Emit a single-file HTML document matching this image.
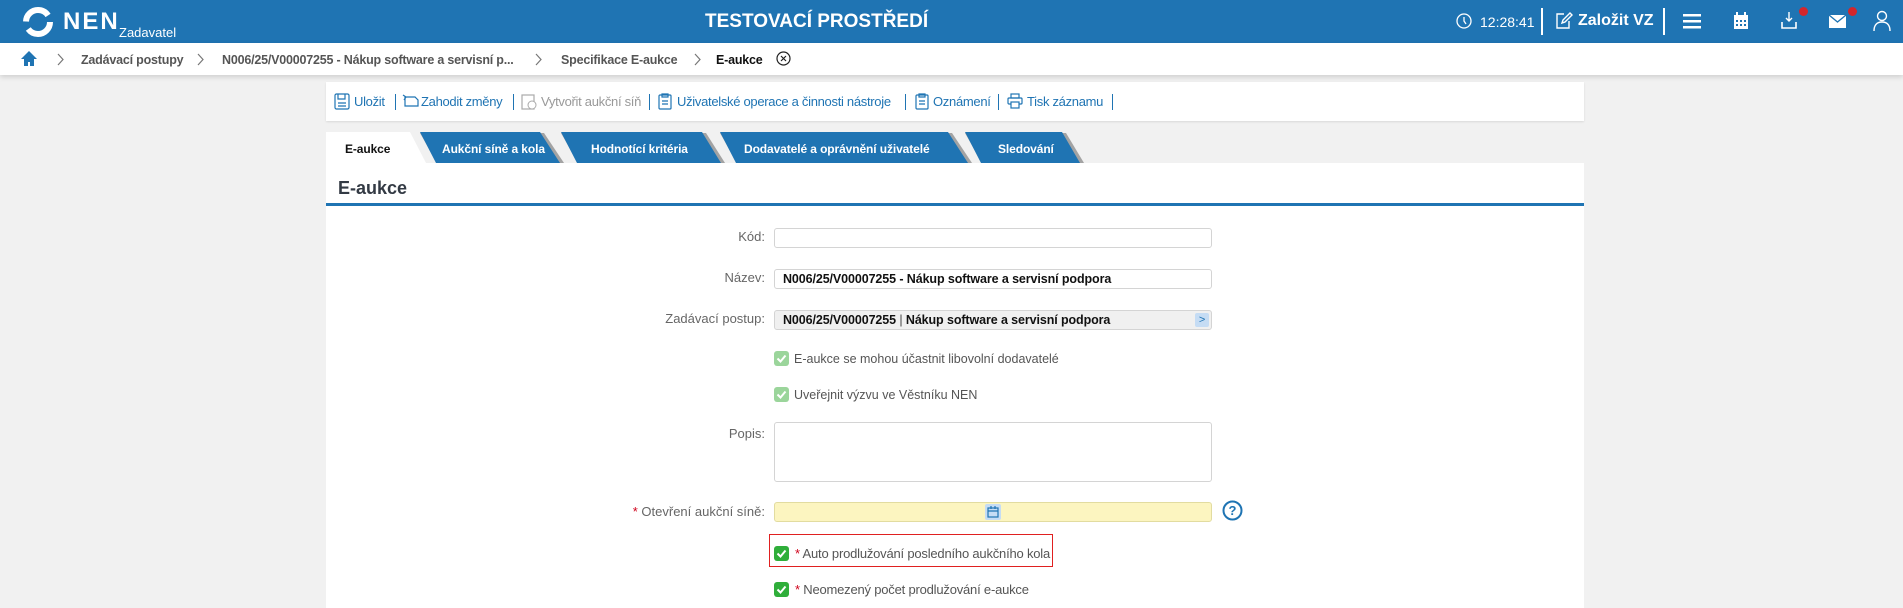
<!DOCTYPE html>
<html><head><meta charset="utf-8">
<style>
*{box-sizing:border-box;margin:0;padding:0}
body{width:1903px;height:608px;overflow:hidden;background:#f1f1f1;font-family:"Liberation Sans",sans-serif;position:relative}
.hdr{position:absolute;left:0;top:0;width:1903px;height:43px;background:#1f74b3;color:#fff}
.abs{position:absolute}
.bc{position:absolute;left:0;top:43px;width:1903px;height:32px;background:#fff;box-shadow:0 2px 5px rgba(0,0,0,.15);font-size:12.5px;font-weight:bold;color:#555}
.bc span{position:absolute;top:10px;white-space:nowrap;letter-spacing:-.2px}
.bc svg.ch{position:absolute;top:10px}
.tb{position:absolute;left:326px;top:82px;width:1258px;height:39px;background:#fff;box-shadow:0 1px 2px rgba(0,0,0,.1);font-size:13px;color:#1f74b3;letter-spacing:-.3px}
.tb span{position:absolute;top:12px;white-space:nowrap}
.tb svg{position:absolute;top:11px}
.sep{width:1px;height:16px;background:#1f74b3;top:12px!important}
.tab{position:absolute;top:132px;height:31px;color:#fff;font-size:12px;font-weight:bold;letter-spacing:-.1px}
.tab svg{position:absolute;left:0;top:0}
.tab b{position:absolute;top:10px;white-space:nowrap}
.panel{position:absolute;left:326px;top:163px;width:1258px;height:445px;background:#fff}
.lbl{position:absolute;right:1138px;font-size:13px;color:#666;white-space:nowrap}
.inp{position:absolute;left:774px;width:438px;height:20px;border:1px solid #d4d4d4;border-radius:3px;background:#fff;font-size:12.5px;font-weight:bold;color:#111;padding:3px 8px;white-space:nowrap;line-height:13px;letter-spacing:-.1px}
.cb{position:absolute;left:774px;width:15px;height:15px;border-radius:3px}
.cbt{position:absolute;left:794px;font-size:12.5px;color:#555;white-space:nowrap}
</style></head><body>
<div class="hdr">
<svg class="abs" style="left:22px;top:6px" width="32" height="32" viewBox="0 0 32 32"><circle cx="16" cy="16" r="12" fill="none" stroke="#fff" stroke-width="6" stroke-dasharray="30 8"/></svg>
<div class="abs" style="left:63px;top:8px;font-size:24px;font-weight:bold;letter-spacing:2px">NEN</div>
<div class="abs" style="left:119px;top:25px;font-size:13px">Zadavatel</div>
<div class="abs" style="left:705px;top:11px;font-size:19px;font-weight:bold">TESTOVACÍ PROSTŘEDÍ</div>
<svg class="abs" style="left:1456px;top:13px" width="16" height="16" viewBox="0 0 16 16"><circle cx="8" cy="8" r="7" fill="none" stroke="#fff" stroke-width="1.3"/><path d="M8 4v4l2 3" fill="none" stroke="#fff" stroke-width="1.3"/></svg>
<div class="abs" style="left:1480px;top:14px;font-size:14px">12:28:41</div>
<div class="abs" style="left:1541px;top:8px;width:2px;height:27px;background:#fff"></div>
<svg class="abs" style="left:1555px;top:11px" width="18" height="19" viewBox="0 0 18 19"><path d="M9 3H2v14h12v-7" fill="none" stroke="#fff" stroke-width="1.4"/><path d="M7 12l1-3 7-7 2 2-7 7z" fill="none" stroke="#fff" stroke-width="1.4"/></svg>
<div class="abs" style="left:1578px;top:12px;font-size:16px;font-weight:bold">Založit VZ</div>
<div class="abs" style="left:1663px;top:8px;width:2px;height:27px;background:#fff"></div>
<svg class="abs" style="left:1683px;top:14px" width="18" height="15"><rect y="0" width="18" height="2.5" fill="#fff"/><rect y="6" width="18" height="2.5" fill="#fff"/><rect y="12" width="18" height="2.5" fill="#fff"/></svg>
<svg class="abs" style="left:1733px;top:12px" width="16" height="18"><rect x="1" y="3" width="14" height="14" fill="#fff"/><rect x="3" y="0" width="2" height="4" fill="#fff"/><rect x="11" y="0" width="2" height="4" fill="#fff"/><g fill="#1f74b3"><rect x="3" y="8" width="2" height="2"/><rect x="7" y="8" width="2" height="2"/><rect x="11" y="8" width="2" height="2"/><rect x="3" y="12" width="2" height="2"/><rect x="7" y="12" width="2" height="2"/><rect x="11" y="12" width="2" height="2"/></g></svg>
<svg class="abs" style="left:1781px;top:11px" width="16" height="19"><path d="M8 1v9M5 7l3 3 3-3" fill="none" stroke="#fff" stroke-width="1.4"/><path d="M1 11v6h14v-6" fill="none" stroke="#fff" stroke-width="1.6"/></svg>
<div class="abs" style="left:1799px;top:7px;width:9px;height:9px;border-radius:50%;background:#d3262c"></div>
<svg class="abs" style="left:1829px;top:15px" width="17" height="13"><rect width="17" height="13" fill="#fff"/><path d="M0 0l8.5 7L17 0" fill="none" stroke="#1f74b3" stroke-width="1.3"/></svg>
<div class="abs" style="left:1848px;top:7px;width:9px;height:9px;border-radius:50%;background:#d3262c"></div>
<svg class="abs" style="left:1873px;top:10px" width="18" height="22"><circle cx="9" cy="6" r="4.5" fill="none" stroke="#fff" stroke-width="1.4"/><path d="M1 21c0-6 3-9 8-9s8 3 8 9" fill="none" stroke="#fff" stroke-width="1.4"/></svg>
</div>
<div class="bc">
<svg class="abs" style="left:20px;top:7px" width="18" height="17"><path d="M9 1L1 9h3v7h4v-4h2v4h4V9h3z" fill="#1f74b3"/></svg>
<svg class="ch" style="left:57px" width="8" height="13"><path d="M1 1l5 5.5L1 12" fill="none" stroke="#777" stroke-width="1.2"/></svg>
<span style="left:81px">Zadávací postupy</span>
<svg class="ch" style="left:197px" width="8" height="13"><path d="M1 1l5 5.5L1 12" fill="none" stroke="#777" stroke-width="1.2"/></svg>
<span style="left:222px">N006/25/V00007255 - Nákup software a servisní p...</span>
<svg class="ch" style="left:535px" width="8" height="13"><path d="M1 1l5 5.5L1 12" fill="none" stroke="#777" stroke-width="1.2"/></svg>
<span style="left:561px">Specifikace E-aukce</span>
<svg class="ch" style="left:694px" width="8" height="13"><path d="M1 1l5 5.5L1 12" fill="none" stroke="#777" stroke-width="1.2"/></svg>
<span style="left:716px;color:#111">E-aukce</span>
<svg class="abs" style="left:776px;top:8px" width="15" height="15"><circle cx="7.5" cy="7.5" r="6.5" fill="none" stroke="#222" stroke-width="1.2"/><path d="M5 5l5 5M10 5l-5 5" stroke="#222" stroke-width="1.2"/></svg>
</div>
<div class="tb">
<svg style="left:8px" width="16" height="17"><rect x="1" y="1" width="14" height="15" rx="1.5" fill="none" stroke="#1f74b3" stroke-width="1.2"/><path d="M4 1v5h7V1M4 10h8M4 13h8" fill="none" stroke="#1f74b3" stroke-width="1.2"/></svg>
<span style="left:28px">Uložit</span><span class="sep" style="left:69px"></span>
<svg style="left:76px" width="18" height="14"><path d="M3 4h10l3 3v6H3zM1 2l3 2-2 3" fill="none" stroke="#1f74b3" stroke-width="1.2"/></svg>
<span style="left:95px">Zahodit změny</span><span class="sep" style="left:187px"></span>
<svg style="left:195px" width="16" height="17"><rect x="1" y="2" width="12" height="14" fill="none" stroke="#aaa" stroke-width="1.2"/><circle cx="11" cy="12" r="4" fill="#fff" stroke="#aaa"/></svg>
<span style="left:215px;color:#999">Vytvořit aukční síň</span><span class="sep" style="left:323px"></span>
<svg style="left:332px" width="14" height="17"><rect x="1" y="2" width="12" height="14" rx="1" fill="none" stroke="#1f74b3" stroke-width="1.2"/><path d="M4 1h6v3H4zM4 8h6M4 11h6" fill="none" stroke="#1f74b3" stroke-width="1.2"/></svg>
<span style="left:351px">Uživatelské operace a činnosti nástroje</span><span class="sep" style="left:579px"></span>
<svg style="left:589px" width="14" height="17"><rect x="1" y="2" width="12" height="14" rx="1" fill="none" stroke="#1f74b3" stroke-width="1.2"/><path d="M4 1h6v3H4zM4 8h6M4 11h6" fill="none" stroke="#1f74b3" stroke-width="1.2"/></svg>
<span style="left:607px">Oznámení</span><span class="sep" style="left:672px"></span>
<svg style="left:681px" width="16" height="16"><rect x="4" y="1" width="8" height="4" fill="none" stroke="#1f74b3" stroke-width="1.2"/><rect x="1" y="5" width="14" height="6" rx="1" fill="none" stroke="#1f74b3" stroke-width="1.2"/><rect x="4" y="9" width="8" height="6" fill="#fff" stroke="#1f74b3" stroke-width="1.2"/></svg>
<span style="left:701px">Tisk záznamu</span><span class="sep" style="left:786px"></span>
</div>
<div class="tab" style="left:326px;width:100px"><svg width="100" height="31"><path d="M0 0H84L100 31H0z" fill="#fff"/></svg><b style="left:19px;color:#111">E-aukce</b></div>
<div class="tab" style="left:420px;width:145px"><svg width="145" height="31"><path d="M0 1H124L144 31H17z" fill="#555" opacity=".5"/><path d="M0 0H120L140 31H16z" fill="#1f74b3"/></svg><b style="left:22px">Aukční síně a kola</b></div>
<div class="tab" style="left:561px;width:165px"><svg width="165" height="31"><path d="M0 1H145L164 31H17z" fill="#555" opacity=".5"/><path d="M0 0H141L160 31H16z" fill="#1f74b3"/></svg><b style="left:30px">Hodnotící kritéria</b></div>
<div class="tab" style="left:720px;width:260px"><svg width="260" height="31"><path d="M0 1H232L252 31H17z" fill="#555" opacity=".5"/><path d="M0 0H228L248 31H16z" fill="#1f74b3"/></svg><b style="left:24px">Dodavatelé a oprávnění uživatelé</b></div>
<div class="tab" style="left:965px;width:120px"><svg width="120" height="31"><path d="M0 1H101L119 31H17z" fill="#555" opacity=".5"/><path d="M0 0H97L115 31H16z" fill="#1f74b3"/></svg><b style="left:33px">Sledování</b></div>
<div class="panel">
<div class="abs" style="left:12px;top:15px;font-size:18px;font-weight:bold;color:#333a44">E-aukce</div>
<div class="abs" style="left:0;top:40px;width:1258px;height:3px;background:#1f74b3"></div>
</div>
<div class="lbl" style="top:229px">Kód:</div><div class="inp" style="top:228px"></div>
<div class="lbl" style="top:270px">Název:</div><div class="inp" style="top:269px">N006/25/V00007255 - Nákup software a servisní podpora</div>
<div class="lbl" style="top:311px">Zadávací postup:</div><div class="inp" style="top:310px;background:#f0f0f0">N006/25/V00007255 <span style="font-weight:normal;color:#444">|</span> Nákup software a servisní podpora<span style="position:absolute;right:2px;top:2px;width:14px;height:14px;background:#c5dcf4;border-radius:2px;color:#1f74b3;font-size:11px;text-align:center;line-height:14px;font-weight:normal">&gt;</span></div>
<div class="cb" style="top:351px;background:#9bd59b"><svg width="15" height="15"><path d="M3.5 7.5l3 3 5-6" fill="none" stroke="#fff" stroke-width="2"/></svg></div><div class="cbt" style="top:352px">E-aukce se mohou účastnit libovolní dodavatelé</div>
<div class="cb" style="top:387px;background:#9bd59b"><svg width="15" height="15"><path d="M3.5 7.5l3 3 5-6" fill="none" stroke="#fff" stroke-width="2"/></svg></div><div class="cbt" style="top:388px">Uveřejnit výzvu ve Věstníku NEN</div>
<div class="lbl" style="top:426px">Popis:</div><div class="inp" style="top:422px;height:60px"></div>
<div class="lbl" style="top:504px"><span style="color:#d0021b">*</span> Otevření aukční síně:</div>
<div class="inp" style="top:502px;background:#fcf5c0;border-color:#e2dca0"><span style="position:absolute;left:210px;top:1px;width:16px;height:16px;background:#c5dcf4;border-radius:2px"><svg width="16" height="16"><rect x="3" y="4" width="10" height="9" fill="none" stroke="#1f74b3" stroke-width="1.2"/><path d="M3 7h10M6 2v3M10 2v3" stroke="#1f74b3" stroke-width="1.2"/></svg></span></div>
<svg class="abs" style="left:1222px;top:500px" width="21" height="21"><circle cx="10.5" cy="10.5" r="9" fill="none" stroke="#1f74b3" stroke-width="2"/><text x="10.5" y="15" text-anchor="middle" font-family="Liberation Sans" font-weight="bold" font-size="13" fill="#1f74b3">?</text></svg>
<div class="abs" style="left:769px;top:534px;width:284px;height:33px;border:1px solid #e02020"></div>
<div class="cb" style="top:546px;background:#2fae3a"><svg width="15" height="15"><path d="M3.5 7.5l3 3 5-6" fill="none" stroke="#fff" stroke-width="2"/></svg></div><div class="cbt" style="top:546px;left:795px;font-size:13px;letter-spacing:-.2px"><span style="color:#d0021b">*</span> Auto prodlužování posledního aukčního kola</div>
<div class="cb" style="top:582px;background:#2fae3a"><svg width="15" height="15"><path d="M3.5 7.5l3 3 5-6" fill="none" stroke="#fff" stroke-width="2"/></svg></div><div class="cbt" style="top:582px;left:795px;font-size:13px;letter-spacing:-.2px"><span style="color:#d0021b">*</span> Neomezený počet prodlužování e-aukce</div>
</body></html>
